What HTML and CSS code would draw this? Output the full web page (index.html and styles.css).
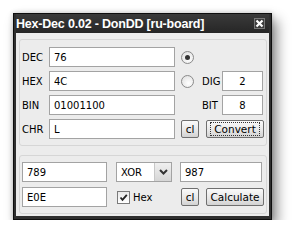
FILE: index.html
```html
<!DOCTYPE html>
<html lang="en">
<head>
  <meta charset="UTF-8" />
  <title>Hex-Dec 0.02</title>
  <link rel="stylesheet" href="styles.css">
</head>
<body>
  <div class="window">
    <div class="titlebar">
      <span class="title">Hex-Dec 0.02 - DonDD [ru-board]</span>
      <span class="close">
        <svg width="9" height="9" viewBox="0 0 9 9"><path d="M1.5 1.5 L7.5 7.5 M7.5 1.5 L1.5 7.5" stroke="#fff" stroke-width="2.2"/></svg>
      </span>
    </div>
    <div class="content">
      <div class="group group-top">
        <div class="row">
          <span class="label">DEC</span>
          <input class="field wide" value="76">
          <span class="radio checked"></span>
        </div>
        <div class="row">
          <span class="label">HEX</span>
          <input class="field wide" value="4C">
          <span class="radio"></span>
          <span class="label small">DIG</span>
          <input class="field tiny" value="2">
        </div>
        <div class="row">
          <span class="label">BIN</span>
          <input class="field wide" value="01001100">
          <span class="radio-gap"></span>
          <span class="label small">BIT</span>
          <input class="field tiny" value="8">
        </div>
        <div class="row">
          <span class="label">CHR</span>
          <input class="field wide" value="L">
          <button class="btn btn-cl">cl</button>
          <button class="btn btn-main focused"><span>Convert</span></button>
        </div>
      </div>
      <div class="group group-bottom">
        <div class="row">
          <input class="field mid" value="789">
          <div class="select">
            <span>XOR</span>
            <span class="drop">
              <svg width="9" height="6" viewBox="0 0 9 6"><path d="M1 1 L4.5 4.5 L8 1" fill="none" stroke="#333" stroke-width="2"/></svg>
            </span>
          </div>
          <input class="field right" value="987">
        </div>
        <div class="row">
          <input class="field mid" value="E0E">
          <label class="check">
            <span class="box">
              <svg width="9" height="9" viewBox="0 0 9 9"><path d="M1.5 4.5 L3.5 6.8 L7.8 1.8" fill="none" stroke="#222" stroke-width="1.8"/></svg>
            </span>
            Hex
          </label>
          <button class="btn btn-cl">cl</button>
          <button class="btn btn-main"><span>Calculate</span></button>
        </div>
      </div>
    </div>
  </div>
</body>
</html>
```
FILE: styles.css
```css
body {
  margin: 0;
  padding: 13px 0 0 13px;
  background: #ffffff;
  font-family: "DejaVu Sans", Verdana, sans-serif;
  font-size: 10px;
  color: #000;
}
.window {
  width: 259px;
  height: 207px;
  box-sizing: border-box;
  background: #2f2f2f;
  border: 1px solid #0e0e0e;
  padding: 0 2px 2px;
  box-shadow: 5px 7px 12px rgba(0, 0, 0, 0.45), 0 0 5px rgba(0, 0, 0, 0.2);
}
.titlebar {
  height: 19px;
  display: flex;
  align-items: center;
  justify-content: space-between;
  padding: 0 4px 0 0;
  background: linear-gradient(#3a3a3a, #262626);
}
.title {
  color: #fff;
  font-family: "Liberation Sans", Arial, sans-serif;
  font-weight: bold;
  font-size: 12.5px;
  letter-spacing: -0.2px;
}
.close {
  width: 11px;
  height: 11px;
  box-sizing: border-box;
  border: 1px solid #777;
  background: #3c3c3c;
  display: flex;
  align-items: center;
  justify-content: center;
}
.content {
  height: 183px;
  background: #ececec;
  padding: 6px 2px 0 3px;
  box-sizing: border-box;
}
.group {
  border: 1px solid #d6d6d6;
  border-radius: 3px;
  padding: 7px 0 6px 2px;
  display: flex;
  flex-direction: column;
  gap: 4px;
}
.group-bottom {
  margin-top: 9px;
  padding-top: 6px;
  gap: 5px;
}
.row {
  height: 20px;
  display: flex;
  align-items: center;
}
.label {
  width: 27px;
}
.label.small {
  width: 20px;
  margin-left: 8px;
}
.field {
  height: 20px;
  box-sizing: border-box;
  border: 1px solid #a3a3a3;
  background: #fff;
  font: inherit;
  padding: 0 0 0 4px;
  margin: 0;
  outline: none;
}
.wide { width: 126px; }
.tiny { width: 41px; text-align: center; padding: 0; }
.mid { width: 85px; }
.right { width: 82px; margin-left: 8px; }
.radio, .radio-gap {
  width: 13px;
  height: 13px;
  margin-left: 6px;
  box-sizing: border-box;
}
.radio {
  border: 1px solid #8a8a8a;
  border-radius: 50%;
  background: radial-gradient(circle at 60% 65%, #fff, #dcdcdc);
  position: relative;
}
.radio.checked::after {
  content: "";
  position: absolute;
  left: 3px;
  top: 3px;
  width: 5px;
  height: 5px;
  border-radius: 50%;
  background: #333;
}
.btn {
  height: 18px;
  box-sizing: border-box;
  border: 1px solid #6f6f6f;
  border-radius: 2px;
  background: linear-gradient(#fafafa, #e6e6e6 60%, #d2d2d2);
  font: inherit;
  font-size: 10.5px;
  padding: 0;
  margin: 0;
  display: flex;
  align-items: center;
  justify-content: center;
}
.btn-cl {
  width: 18px;
  margin-left: 6px;
}
.btn-main {
  width: 58px;
  margin-left: 7px;
}
.focused span {
  border: 1px dotted #333;
  padding: 0 3px;
  line-height: 12px;
}
.select {
  width: 56px;
  height: 20px;
  margin-left: 9px;
  box-sizing: border-box;
  border: 1px solid #a3a3a3;
  background: #fff;
  display: flex;
  align-items: center;
  justify-content: space-between;
  padding-left: 4px;
}
.drop {
  width: 17px;
  height: 18px;
  box-sizing: border-box;
  border-left: 1px solid #c8c8c8;
  background: linear-gradient(#f0f0f0, #d6d6d6);
  display: flex;
  align-items: center;
  justify-content: center;
}
.check {
  display: flex;
  align-items: center;
  gap: 3px;
  margin-left: 10px;
  width: 58px;
}
.box {
  width: 13px;
  height: 13px;
  box-sizing: border-box;
  border: 1px solid #7a7a7a;
  background: linear-gradient(#e8e8e8, #fff);
  display: flex;
  align-items: center;
  justify-content: center;
}
```
